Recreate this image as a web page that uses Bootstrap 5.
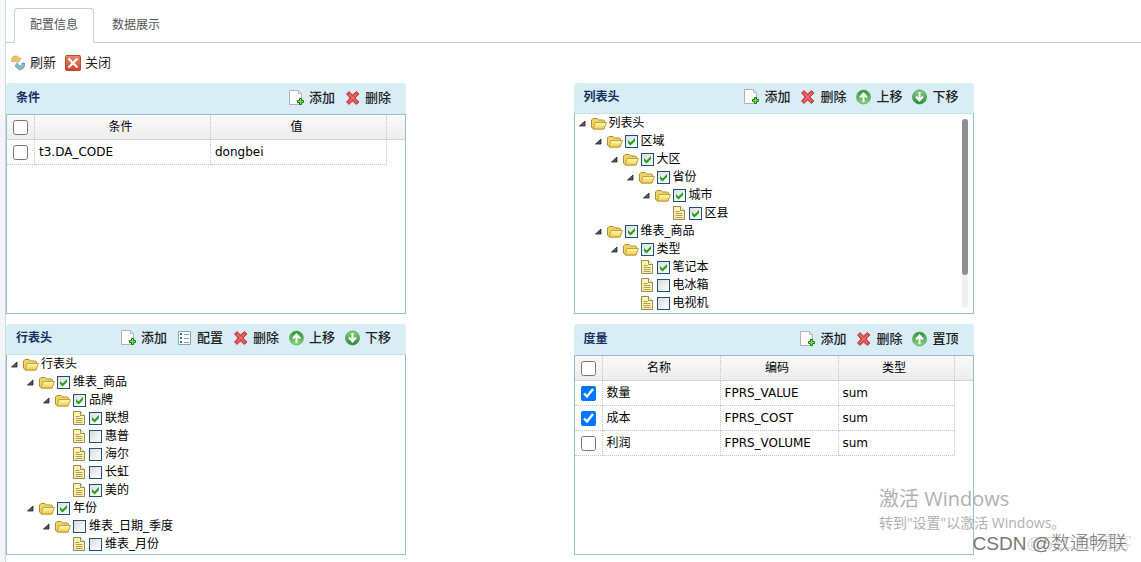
<!DOCTYPE html>
<html lang="zh-CN">
<head>
<meta charset="utf-8">
<meta name="viewport" content="width=device-width, initial-scale=1">
<title>配置信息</title>
<link href="https://cdn.jsdelivr.net/npm/bootstrap@5.3.0/dist/css/bootstrap.min.css" rel="stylesheet">
<style>
  body { font: 12px/18px "DejaVu Sans", "Noto Sans CJK SC", sans-serif; color: #000; background: #fff; overflow: hidden; }
  .gutter { width: 6px; background: linear-gradient(#f8f9fc 120px, #f3f4f6 120px); border-right: 1px solid #d3d7de; }
  .page-area { min-width: 0; }
  .cfg-tabs { padding: 8px 0 0 8px; border-bottom-color: #ccc; gap: 2px; }
  .cfg-tabs .nav-link { color: #555; padding: 7px 15px 8px; line-height: 18px; border-radius: 4px 4px 0 0; }
  .cfg-tabs .nav-link.active { color: #555; border-color: #ccc #ccc #fff; }
  .tool { display: inline-flex; align-items: center; gap: 4px; border: 0; padding: 0; background: none; font-size: 13px; line-height: 20px; color: #222; white-space: nowrap; }
  .tool svg, .tree svg { width: 16px; height: 16px; flex: none; }
  .page-tools { padding: 10px 4px; height: 40px; gap: 9px; }
  .panel { width: 400px; max-width: 100%; height: 231px; margin-bottom: 10px; }
  .panel-head { height: 30px; padding: 0 15px 2px 10px; background: #d9edf7; border-radius: 3px 3px 0 0; }
  .grid-panel .panel-head { height: 31px; }
  .panel-head h2 { font-size: 12px; line-height: 18px; font-weight: 700; color: #15315f; }
  .panel-head .tool { font-weight: 500; }
  .panel-head .tools { gap: 10px; }
  .panel-body { border: 1px solid #99bbd0; min-height: 0; overflow: hidden; }
  .tree-panel .panel-body { border-top-color: #bfe2ec; }
  .grid { width: 100%; table-layout: fixed; border-collapse: separate; border-spacing: 0; }
  .grid th, .grid td { height: 25px; padding: 0 4px; line-height: 18px; border: 0 dotted #c4c4c4; border-width: 0 1px 1px 0; font-weight: 400; white-space: nowrap; }
  .grid th { padding-right: 8px; text-align: center; background: linear-gradient(#f9f9f9, #ededed); border-bottom: 1px solid #d5d5d5; }
  .grid th:last-child { border-right: 0; }
  .grid td:last-child { border: 0; }
  .grid .pick { width: 28px; padding: 0; text-align: center; line-height: 0; }
  .grid input { width: 15px; height: 15px; margin: 0; vertical-align: middle; accent-color: #0075ff; }
  .grid .col-pick { width: 28px; }
  .grid .col-field { width: 118px; }
  .grid .col-rest { width: 18px; }
  .tree, .tree ul { list-style: none; margin: 0; padding: 0; }
  .tree ul { padding-left: 16px; }
  .node { display: flex; align-items: center; height: 18px; line-height: 18px; white-space: nowrap; }
  .node > span, .node > label { padding-left: 2px; }
  .leaf { padding-left: 16px; }
  .node input { appearance: none; width: 13px; height: 13px; margin: 0 1px 0 2px; border: 1px solid #1c5180; background: linear-gradient(135deg, #dcdcd7, #fff); flex: none; }
  .node input:checked { background: url("data:image/svg+xml,%3Csvg xmlns='http://www.w3.org/2000/svg' viewBox='0 0 11 11'%3E%3Cpath d='M2 4v3l2.500 2.500L9 5V2L4.500 6.500z' fill='%2321a121'/%3E%3C/svg%3E"), linear-gradient(135deg, #dcdcd7, #fff); }
  .scroll-rail { position: absolute; top: 5px; right: 5px; bottom: 5px; width: 6px; border-radius: 3px; background: #f1f1f1; }
  .scroll-thumb { height: 156px; border-radius: 3px; background: #8f8f8f; }
  .notice { position: absolute; right: 54px; bottom: 28px; width: 208px; color: #b0b0b0; font-family: "Open Sans", "Noto Sans CJK SC", sans-serif; pointer-events: none; white-space: nowrap; }
  .notice p { font-size: 20px; line-height: 26px; }
  .notice small { display: block; font-size: 14px; line-height: 22px; }
  .credit { position: absolute; right: 14px; bottom: 4px; font: 19px/28px "Liberation Sans", "Noto Sans CJK SC", sans-serif; font-weight: 300; color: #777; pointer-events: none; white-space: nowrap; }
  .credit-under { right: 9px; font-size: 17px; color: #d8d8d8; }
</style>
</head>
<body>
<svg class="position-absolute" width="0" height="0" aria-hidden="true" xmlns="http://www.w3.org/2000/svg">
  <defs>
    <linearGradient id="gf" x2="0" y2="1"><stop stop-color="#fffbb8"/><stop offset="1" stop-color="#f0cb45"/></linearGradient>
    <linearGradient id="gg" x2="0" y2="1"><stop stop-color="#2d9437"/><stop offset="1" stop-color="#8ed587"/></linearGradient>
    <linearGradient id="gd" x2="0" y2="1"><stop stop-color="#8ed587"/><stop offset="1" stop-color="#23882d"/></linearGradient>
    <linearGradient id="gr" x2="0" y2="1"><stop stop-color="#e28a6b"/><stop offset="1" stop-color="#cf4527"/></linearGradient>
  </defs>
  <symbol id="add" viewBox="0 0 16 16"><path d="M.5.5h9l3 3v11H.5z" fill="#fcfcfc" stroke="#aeb2b5"/><path d="M9.500.5v3h3" fill="#e4e6e8" stroke="#b9bcbe"/><path d="M10.500 8.500h2v2h2v2h-2v2h-2v-2h-2v-2h2z" fill="#7be84c" stroke="#147a15"/></symbol>
  <symbol id="del" viewBox="0 0 16 16"><path d="M1.500 4L4 1.500 7.500 5l4-3.500L14 4l-4 4 4 4-2.500 2.500L7.500 11 4 14.500 1.500 12l3.500-4z" fill="#e14a4c" stroke="#b03538" stroke-width=".8"/><path d="M4 4l7.500 8M11.500 4L4 12" stroke="#ef8583"/></symbol>
  <symbol id="up" viewBox="0 0 16 16"><circle cx="7.500" cy="8" r="7" fill="url(#gg)" stroke="#55a958" stroke-width=".7"/><path d="M7.500 13V5M4 8.500l3.500-4 3.500 4" fill="none" stroke="#fff" stroke-width="2"/></symbol>
  <symbol id="down" viewBox="0 0 16 16"><circle cx="7.500" cy="8" r="7" fill="url(#gd)" stroke="#389044" stroke-width=".7"/><path d="M7.500 3v8M4 7.500l3.500 4 3.500-4" fill="none" stroke="#fff" stroke-width="2"/></symbol>
  <symbol id="conf" viewBox="0 0 16 16"><path d="M1.500 1.500h12v13h-12z" fill="#fafdff" stroke="#87a5ad"/><path d="M3 4h2M3 8h2M3 12h2" stroke="#23864a" stroke-width="2"/><path d="M7 4.500h5M7 8.500h5M7 12.500h5" stroke="#8d9da4"/></symbol>
  <symbol id="refresh" viewBox="0 0 16 16"><path d="M1.500 6.500C1 3 3 .8 6 1c2 0 3 1 3.500 2.500L11 3 8.500 7.500 4.500 6 6 5C5 4 4 4.500 4 6.500z" fill="#ebc470" stroke="#bd9650" stroke-width=".6"/><path d="M14.500 8c.8 3.500-1 6-3.500 6.500L9.500 15 5 11l2-3 1.500 1.500L10 11c1.500 0 2-1 2-3z" fill="#83b7cb" stroke="#4b88a0" stroke-width=".6"/></symbol>
  <symbol id="close" viewBox="0 0 16 16"><rect x=".5" y=".5" width="15" height="15" rx="1" fill="url(#gr)" stroke="#b94a2d"/><path d="M3.500 3.500l9 9M12.500 3.500l-9 9" stroke="#fff" stroke-width="2.200"/></symbol>
  <symbol id="folder" viewBox="0 0 16 16"><path d="M.5 12V5L2 3.500h4L7.500 5h5l1 1v7l-1 1H2.500z" fill="#f0d566" stroke="#b48d2a"/><path d="M2.500 7.500L4 6.500h11l.5 1-2 5.500-1 1H2.500L.5 12z" fill="none"/><path d="M4 7.500h11.500L13 14H2z" fill="url(#gf)" stroke="#b8922c" stroke-width=".8" stroke-linejoin="round"/></symbol>
  <symbol id="file" viewBox="0 0 16 16"><path d="M2.500 1.500h7l4 4v9h-11z" fill="#fff4ad" stroke="#948a5c"/><path d="M9.500 1.500v4h4" fill="#fffbe0" stroke="#948a5c"/><path d="M4.500 6.500h4M4.500 8.500h7M4.500 10.500h7M4.500 12.500h7" stroke="#b09c59"/></symbol>
  <symbol id="arrow" viewBox="0 0 16 16"><path d="M10 6v5H4.500z" fill="#555" stroke="#222" stroke-width=".8"/></symbol>
</svg>

<div class="d-flex min-vh-100">
  <div class="gutter flex-shrink-0"></div>
  <main class="page-area flex-fill">
    <ul class="nav nav-tabs cfg-tabs">
      <li class="nav-item"><a class="nav-link active" href="#config">配置信息</a></li>
      <li class="nav-item"><a class="nav-link" href="#data">数据展示</a></li>
    </ul>
    <div class="d-flex align-items-center page-tools">
      <button type="button" class="tool"><svg><use href="#refresh"/></svg>刷新</button>
      <button type="button" class="tool"><svg><use href="#close"/></svg>关闭</button>
    </div>

    <div class="row g-0" id="config">
      <div class="col-6">
        <section class="panel grid-panel d-flex flex-column">
          <div class="panel-head d-flex align-items-center justify-content-between flex-shrink-0">
            <h2 class="m-0">条件</h2>
            <div class="d-flex tools">
              <button type="button" class="tool"><svg><use href="#add"/></svg>添加</button>
              <button type="button" class="tool"><svg><use href="#del"/></svg>删除</button>
            </div>
          </div>
          <div class="panel-body flex-fill">
            <table class="grid">
              <colgroup><col class="col-pick"><col><col><col class="col-rest"></colgroup>
              <thead><tr><th class="pick"><input type="checkbox" aria-label="全选条件"></th><th>条件</th><th>值</th><th></th></tr></thead>
              <tbody><tr><td class="pick"><input type="checkbox" aria-label="t3.DA_CODE"></td><td>t3.DA_CODE</td><td>dongbei</td><td></td></tr></tbody>
            </table>
          </div>
        </section>

        <section class="panel tree-panel d-flex flex-column">
          <div class="panel-head d-flex align-items-center justify-content-between flex-shrink-0">
            <h2 class="m-0">行表头</h2>
            <div class="d-flex tools">
              <button type="button" class="tool"><svg><use href="#add"/></svg>添加</button>
              <button type="button" class="tool"><svg><use href="#conf"/></svg>配置</button>
              <button type="button" class="tool"><svg><use href="#del"/></svg>删除</button>
              <button type="button" class="tool"><svg><use href="#up"/></svg>上移</button>
              <button type="button" class="tool"><svg><use href="#down"/></svg>下移</button>
            </div>
          </div>
          <div class="panel-body flex-fill">
            <ul class="tree">
              <li><div class="node"><svg><use href="#arrow"/></svg><svg><use href="#folder"/></svg><span>行表头</span></div>
                <ul>
                  <li><div class="node"><svg><use href="#arrow"/></svg><svg><use href="#folder"/></svg><input type="checkbox" id="r1" checked><label for="r1">维表_商品</label></div>
                    <ul>
                      <li><div class="node"><svg><use href="#arrow"/></svg><svg><use href="#folder"/></svg><input type="checkbox" id="r2" checked><label for="r2">品牌</label></div>
                        <ul>
                          <li class="node leaf"><svg><use href="#file"/></svg><input type="checkbox" id="r3" checked><label for="r3">联想</label></li>
                          <li class="node leaf"><svg><use href="#file"/></svg><input type="checkbox" id="r4"><label for="r4">惠普</label></li>
                          <li class="node leaf"><svg><use href="#file"/></svg><input type="checkbox" id="r5"><label for="r5">海尔</label></li>
                          <li class="node leaf"><svg><use href="#file"/></svg><input type="checkbox" id="r6"><label for="r6">长虹</label></li>
                          <li class="node leaf"><svg><use href="#file"/></svg><input type="checkbox" id="r7" checked><label for="r7">美的</label></li>
                        </ul>
                      </li>
                    </ul>
                  </li>
                  <li><div class="node"><svg><use href="#arrow"/></svg><svg><use href="#folder"/></svg><input type="checkbox" id="r8" checked><label for="r8">年份</label></div>
                    <ul>
                      <li><div class="node"><svg><use href="#arrow"/></svg><svg><use href="#folder"/></svg><input type="checkbox" id="r9"><label for="r9">维表_日期_季度</label></div>
                        <ul>
                          <li class="node leaf"><svg><use href="#file"/></svg><input type="checkbox" id="r10"><label for="r10">维表_月份</label></li>
                        </ul>
                      </li>
                    </ul>
                  </li>
                </ul>
              </li>
            </ul>
          </div>
        </section>
      </div>

      <div class="col-6">
        <section class="panel tree-panel d-flex flex-column">
          <div class="panel-head d-flex align-items-center justify-content-between flex-shrink-0">
            <h2 class="m-0">列表头</h2>
            <div class="d-flex tools">
              <button type="button" class="tool"><svg><use href="#add"/></svg>添加</button>
              <button type="button" class="tool"><svg><use href="#del"/></svg>删除</button>
              <button type="button" class="tool"><svg><use href="#up"/></svg>上移</button>
              <button type="button" class="tool"><svg><use href="#down"/></svg>下移</button>
            </div>
          </div>
          <div class="panel-body flex-fill position-relative">
            <ul class="tree">
              <li><div class="node"><svg><use href="#arrow"/></svg><svg><use href="#folder"/></svg><span>列表头</span></div>
                <ul>
                  <li><div class="node"><svg><use href="#arrow"/></svg><svg><use href="#folder"/></svg><input type="checkbox" id="c1" checked><label for="c1">区域</label></div>
                    <ul>
                      <li><div class="node"><svg><use href="#arrow"/></svg><svg><use href="#folder"/></svg><input type="checkbox" id="c2" checked><label for="c2">大区</label></div>
                        <ul>
                          <li><div class="node"><svg><use href="#arrow"/></svg><svg><use href="#folder"/></svg><input type="checkbox" id="c3" checked><label for="c3">省份</label></div>
                            <ul>
                              <li><div class="node"><svg><use href="#arrow"/></svg><svg><use href="#folder"/></svg><input type="checkbox" id="c4" checked><label for="c4">城市</label></div>
                                <ul>
                                  <li class="node leaf"><svg><use href="#file"/></svg><input type="checkbox" id="c5" checked><label for="c5">区县</label></li>
                                </ul>
                              </li>
                            </ul>
                          </li>
                        </ul>
                      </li>
                    </ul>
                  </li>
                  <li><div class="node"><svg><use href="#arrow"/></svg><svg><use href="#folder"/></svg><input type="checkbox" id="c6" checked><label for="c6">维表_商品</label></div>
                    <ul>
                      <li><div class="node"><svg><use href="#arrow"/></svg><svg><use href="#folder"/></svg><input type="checkbox" id="c7" checked><label for="c7">类型</label></div>
                        <ul>
                          <li class="node leaf"><svg><use href="#file"/></svg><input type="checkbox" id="c8" checked><label for="c8">笔记本</label></li>
                          <li class="node leaf"><svg><use href="#file"/></svg><input type="checkbox" id="c9"><label for="c9">电冰箱</label></li>
                          <li class="node leaf"><svg><use href="#file"/></svg><input type="checkbox" id="c10"><label for="c10">电视机</label></li>
                        </ul>
                      </li>
                    </ul>
                  </li>
                </ul>
              </li>
            </ul>
            <div class="scroll-rail"><div class="scroll-thumb"></div></div>
          </div>
        </section>

        <section class="panel grid-panel d-flex flex-column">
          <div class="panel-head d-flex align-items-center justify-content-between flex-shrink-0">
            <h2 class="m-0">度量</h2>
            <div class="d-flex tools">
              <button type="button" class="tool"><svg><use href="#add"/></svg>添加</button>
              <button type="button" class="tool"><svg><use href="#del"/></svg>删除</button>
              <button type="button" class="tool"><svg><use href="#up"/></svg>置顶</button>
            </div>
          </div>
          <div class="panel-body flex-fill">
            <table class="grid">
              <colgroup><col class="col-pick"><col class="col-field"><col class="col-field"><col><col class="col-rest"></colgroup>
              <thead><tr><th class="pick"><input type="checkbox" aria-label="全选度量"></th><th>名称</th><th>编码</th><th>类型</th><th></th></tr></thead>
              <tbody>
                <tr><td class="pick"><input type="checkbox" aria-label="数量" checked></td><td>数量</td><td>FPRS_VALUE</td><td>sum</td><td></td></tr>
                <tr><td class="pick"><input type="checkbox" aria-label="成本" checked></td><td>成本</td><td>FPRS_COST</td><td>sum</td><td></td></tr>
                <tr><td class="pick"><input type="checkbox" aria-label="利润"></td><td>利润</td><td>FPRS_VOLUME</td><td>sum</td><td></td></tr>
              </tbody>
            </table>
          </div>
        </section>
      </div>
    </div>
  </main>
</div>

<div class="notice"><p class="m-0">激活 Windows</p><small>转到"设置"以激活 Windows。</small></div>
<div class="credit credit-under">@51CTO博客</div>
<div class="credit">CSDN @数通畅联</div>
<script src="https://cdn.jsdelivr.net/npm/bootstrap@5.3.0/dist/js/bootstrap.bundle.min.js"></script>
</body>
</html>
